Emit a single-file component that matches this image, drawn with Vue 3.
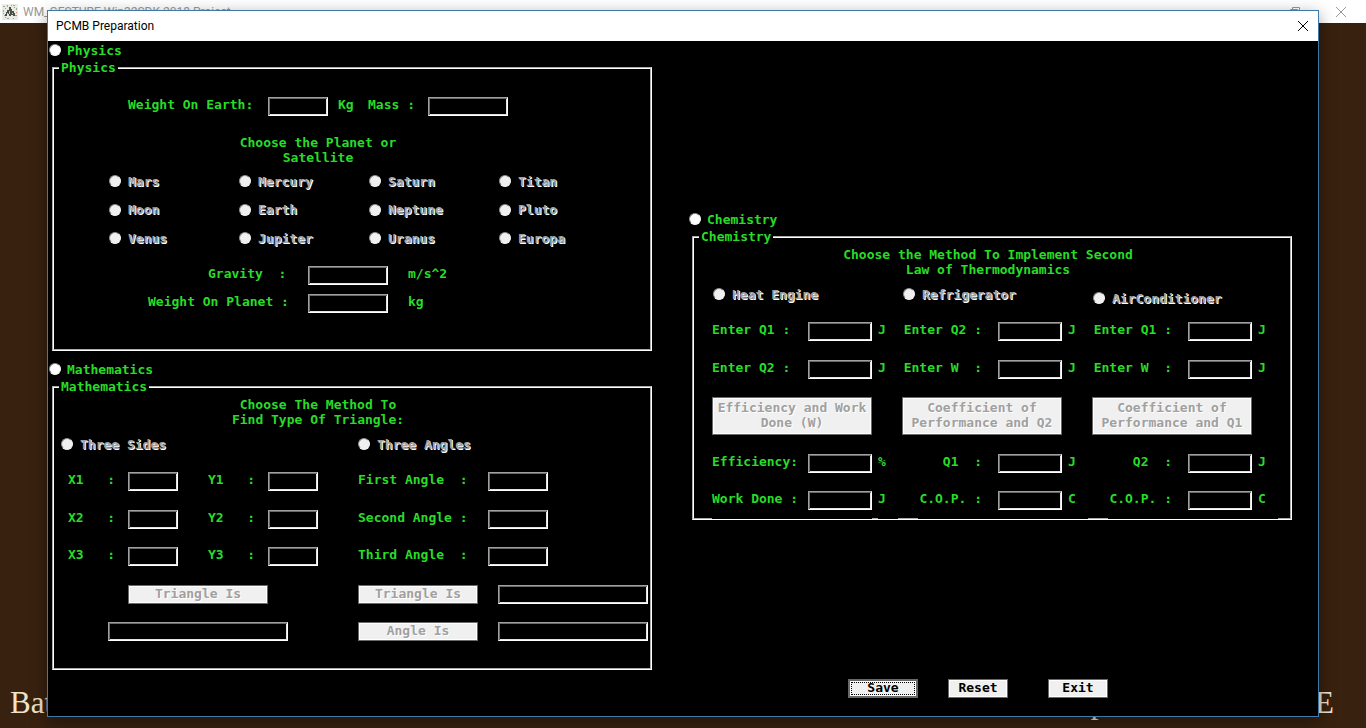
<script setup>
import { ref } from 'vue'

const subject = ref('')
const planet = ref('')
const triangleMethod = ref('')
const process = ref('')

const planets = [
  'Mars', 'Mercury', 'Saturn', 'Titan',
  'Moon', 'Earth', 'Neptune', 'Pluto',
  'Venus', 'Jupiter', 'Uranus', 'Europa',
]

const gravityLabel = 'Gravity  :'
const points = [1, 2, 3]
const coordinate = (axis, n) => `${axis}${n}   :`
const angles = ['First Angle  :', 'Second Angle :', 'Third Angle  :']

const machines = [
  {
    name: 'Heat Engine',
    inputs: [['Enter Q1 :', 'J'], ['Enter Q2 :', 'J']],
    action: ['Efficiency and Work', 'Done (W)'],
    results: [['Efficiency:', '%'], ['Work Done :', 'J']],
  },
  {
    name: 'Refrigerator',
    inputs: [['Enter Q2 :', 'J'], ['Enter W  :', 'J']],
    action: ['Coefficient of', 'Performance and Q2'],
    results: [['Q1  :', 'J'], ['C.O.P. :', 'C']],
  },
  {
    name: 'AirConditioner',
    inputs: [['Enter Q1 :', 'J'], ['Enter W  :', 'J']],
    action: ['Coefficient of', 'Performance and Q1'],
    results: [['Q2  :', 'J'], ['C.O.P. :', 'C']],
  },
]
</script>

<template>
  <div class="desktop">
    <header class="main-bar">
      <svg class="app-icon" viewBox="0 0 16 16" aria-hidden="true">
        <rect width="16" height="16" fill="#e9ebe4" />
        <path d="M1 2h2v1H1zM5 1h1v2H5zM11 1h2v1h-2zM14 4h1v2h-1zM1 6h1v2H1zM2 11h2v1H2zM13 11h2v1h-2zM5 14h2v1H5zM11 14h1v1h-1z" fill="#8fae9c" />
        <path d="M3 4h1v1H3zM12 3h1v1h-1zM1 9h1v1H1zM14 8h1v1h-1zM3 13h1v1H3zM9 1h1v1H9z" fill="#cf8d74" />
        <path d="M7 3h2v2h1v2h2v2h1v3h-2v-1H9v1H7v-2H5v2H3v-2h1V8h1V6h2z" fill="#4a524a" />
        <path d="M7 7h1v3H7zM10 9h1v1h-1zM5 9h1v1H5z" fill="#c9cdc0" />
      </svg>
      <span class="main-title">WM_GESTURE Win32SDK 2018 Project</span>
      <svg class="restore" viewBox="0 0 10 10" aria-hidden="true">
        <path d="M2.5 2.5v-2h7v7h-2M.5 2.5h7v7h-7z" fill="none" stroke="#999" />
      </svg>
      <svg class="cross" viewBox="0 0 10 10" aria-hidden="true">
        <path d="M0 0l10 10M10 0L0 10" fill="none" stroke="#999" />
      </svg>
    </header>
    <footer class="credits">
      <span>Bat</span>
      <span>p: WM_GESTURE</span>
    </footer>

    <section class="dialog" role="dialog" aria-labelledby="dialog-title">
      <header class="dialog-bar">
        <h1 id="dialog-title">PCMB Preparation</h1>
        <button type="button" class="close" aria-label="Close">
          <svg viewBox="0 0 10 10" aria-hidden="true">
            <path d="M0 0l10 10M10 0L0 10" fill="none" stroke="#000" />
          </svg>
        </button>
      </header>

      <form class="body" @submit.prevent>
        <div class="column">
          <label class="radio subject"><input v-model="subject" type="radio" name="subject" value="physics" />Physics</label>
          <fieldset>
            <legend>Physics</legend>
            <div class="row weight">
              <label class="w140" for="weight-earth">Weight On Earth:</label>
              <input id="weight-earth" class="w60" type="text" />
              <span class="kg">Kg</span>
              <label class="w60" for="mass">Mass :</label>
              <input id="mass" class="w80" type="text" />
            </div>
            <p class="heading planet-heading">Choose the Planet or<br />Satellite</p>
            <div class="planets">
              <label v-for="p in planets" :key="p" class="radio off">
                <input v-model="planet" type="radio" name="planet" :value="p" disabled />{{ p }}
              </label>
            </div>
            <div class="planet-results">
              <div class="row">
                <label class="w160 gravity" for="gravity">{{ gravityLabel }}</label>
                <input id="gravity" class="w80" type="text" />
                <span class="unit-wide">m/s^2</span>
              </div>
              <div class="row">
                <label class="w160" for="weight-planet">Weight On Planet :</label>
                <input id="weight-planet" class="w80" type="text" />
                <span class="unit-wide">kg</span>
              </div>
            </div>
          </fieldset>

          <label class="radio subject maths"><input v-model="subject" type="radio" name="subject" value="mathematics" />Mathematics</label>
          <fieldset>
            <legend>Mathematics</legend>
            <p class="heading triangle-heading">Choose The Method To<br />Find Type Of Triangle:</p>
            <div class="methods">
              <div class="sides">
                <label class="radio off"><input v-model="triangleMethod" type="radio" name="triangle" value="sides" disabled />Three Sides</label>
                <div class="lines">
                  <div v-for="n in points" :key="n" class="row">
                    <label class="w60" :for="'x' + n">{{ coordinate('X', n) }}</label>
                    <input :id="'x' + n" class="w50" type="text" />
                    <label class="w60 second" :for="'y' + n">{{ coordinate('Y', n) }}</label>
                    <input :id="'y' + n" class="w50" type="text" />
                  </div>
                  <div class="row inset-button"><button type="button" class="w140" disabled>Triangle Is</button></div>
                  <div class="row inset-result"><input class="w180" type="text" aria-label="Triangle by sides" /></div>
                </div>
              </div>
              <div class="angles">
                <label class="radio off"><input v-model="triangleMethod" type="radio" name="triangle" value="angles" disabled />Three Angles</label>
                <div class="lines">
                  <div v-for="(a, i) in angles" :key="a" class="row">
                    <label class="w130" :for="'angle' + i">{{ a }}</label>
                    <input :id="'angle' + i" class="w60" type="text" />
                  </div>
                  <div class="row spaced">
                    <button type="button" class="w120" disabled>Triangle Is</button>
                    <input class="w150" type="text" aria-label="Triangle by angles" />
                  </div>
                  <div class="row spaced">
                    <button type="button" class="w120" disabled>Angle Is</button>
                    <input class="w150" type="text" aria-label="Angle" />
                  </div>
                </div>
              </div>
            </div>
          </fieldset>
        </div>

        <div class="column right">
          <label class="radio subject"><input v-model="subject" type="radio" name="subject" value="chemistry" />Chemistry</label>
          <fieldset>
            <legend>Chemistry</legend>
            <p class="heading law-heading">Choose the Method To Implement Second<br />Law of Thermodynamics</p>
            <div class="machines">
              <div v-for="(m, c) in machines" :key="m.name" class="machine">
                <label class="radio off"><input v-model="process" type="radio" name="process" :value="m.name" disabled />{{ m.name }}</label>
                <div class="pair given">
                  <div v-for="(f, i) in m.inputs" :key="i" class="row">
                    <label class="quantity" :for="`in-${c}-${i}`">{{ f[0] }}</label>
                    <input :id="`in-${c}-${i}`" class="w64" type="text" />
                    <span class="unit">{{ f[1] }}</span>
                  </div>
                </div>
                <button type="button" class="tall" disabled>{{ m.action[0] }}<br />{{ m.action[1] }}</button>
                <div class="pair found">
                  <div v-for="(f, i) in m.results" :key="i" class="row">
                    <label class="quantity" :for="`out-${c}-${i}`">{{ f[0] }}</label>
                    <input :id="`out-${c}-${i}`" class="w64" type="text" />
                    <span class="unit">{{ f[1] }}</span>
                  </div>
                </div>
              </div>
            </div>
            <div class="edge"><i></i><i></i><i></i><i></i></div>
          </fieldset>
          <div class="actions">
            <button type="submit" class="save">Save</button>
            <button type="reset" class="w60">Reset</button>
            <button type="button" class="w60 exit">Exit</button>
          </div>
        </div>
      </form>
    </section>
  </div>
</template>

<style>
body {
  margin: 0;
  background: #38210f;
}
</style>

<style scoped>
* {
  box-sizing: border-box;
}

.desktop {
  position: relative;
  display: flex;
  flex-direction: column;
  justify-content: space-between;
  min-height: 100vh;
  overflow: hidden;
  background: #38210f;
}

.main-bar {
  display: flex;
  align-items: center;
  height: 23px;
  padding: 0 20px 0 2px;
  background: #fff;
  color: #999;
  font: 12px/16px Roboto, "Noto Sans", sans-serif;
}

.app-icon {
  width: 16px;
  height: 16px;
  margin-right: 5px;
}

.main-title {
  flex: 1;
}

.restore,
.cross {
  width: 10px;
  height: 10px;
}

.restore {
  margin-right: 36px;
}

.cross {
  overflow: visible;
}

.credits {
  display: flex;
  justify-content: space-between;
  padding: 0 32px 8px 10px;
  color: #efe3cd;
  font: 31px/34px "Liberation Serif", serif;
}

.dialog {
  position: absolute;
  inset: 10px 47px 11px;
  display: flex;
  flex-direction: column;
  border: 1px solid #3f79a8;
  background: #000;
  box-shadow: 0 5px 16px rgba(0, 0, 0, 0.4);
}

.dialog-bar {
  display: flex;
  align-items: center;
  justify-content: space-between;
  height: 30px;
  padding: 0 10px 0 8px;
  background: #fff;
  color: #000;
}

h1 {
  margin: 0;
  font: 12px/16px Roboto, "Noto Sans", sans-serif;
}

.close {
  display: flex;
  width: 10px;
  height: 10px;
  padding: 0;
  border: 0;
  background: none;
  box-shadow: none;
}

.close svg {
  width: 10px;
  height: 10px;
  overflow: visible;
}

.body {
  display: grid;
  grid-template-columns: 1fr 1fr;
  gap: 37px;
  padding: 0 26px 0 1px;
  color: #28dc28;
  font: bold 13px/15px "DejaVu Sans Mono", monospace;
}

.column {
  min-width: 0;
}

.right {
  padding-top: 169px;
}

fieldset {
  min-width: 0;
  height: 291px;
  margin: 0 0 0 3px;
  padding: 0;
  border: 2px groove #fff;
}

legend {
  height: 16px;
  margin-left: 5px;
  padding: 0 2px;
}

label,
.row span {
  white-space: pre;
}

.radio {
  display: flex;
  align-items: center;
  gap: 7px;
  height: 18px;
}

.radio.subject {
  gap: 6px;
  margin-bottom: 1px;
}

.radio.maths {
  margin-top: 9px;
}

.off {
  color: #a0a0a0;
  text-shadow: 1px 1px 0 #fff;
}

input[type="radio"] {
  appearance: none;
  flex: none;
  width: 12px;
  height: 12px;
  margin: 0;
  border: 1px solid;
  border-color: #8c8c8c #f4f4f4 #f4f4f4 #8c8c8c;
  border-radius: 50%;
  background: #fff;
}

input[type="radio"]:disabled {
  background: #f0f0f0;
}

input[type="radio"]:checked {
  background: radial-gradient(circle, #000 2px, #fff 3px);
}

input[type="text"] {
  flex: none;
  height: 19px;
  padding: 0 3px;
  border: 1px solid;
  border-color: #a0a0a0 #fff #fff #a0a0a0;
  border-radius: 0;
  outline: 0;
  background: #000;
  box-shadow: inset 1px 1px 0 #696969, inset -1px -1px 0 #e3e3e3;
  color: inherit;
  font: inherit;
}

button {
  flex: none;
  height: 19px;
  padding: 0 0 2px;
  border: 1px solid #696969;
  border-radius: 0;
  background: #f0f0f0;
  box-shadow: inset 0 0 0 1px #fff;
  color: #000;
  font: inherit;
}

button:disabled {
  color: #a0a0a0;
  text-shadow: 1px 1px 0 #fff;
}

.row {
  display: flex;
  align-items: flex-start;
}

.heading {
  margin: 0;
  text-align: center;
}

.w50 { width: 50px; }
.w60 { width: 60px; }
.w64 { width: 64px; }
.w80 { width: 80px; }
.w120 { width: 120px; }
.w130 { width: 130px; }
.w140 { width: 140px; }
.w150 { width: 150px; }
.w160 { width: 160px; }
.w180 { width: 180px; }

.weight {
  padding: 21px 0 0 74px;
}

.kg {
  width: 40px;
  padding-left: 10px;
}

.planet-heading {
  width: 160px;
  margin: 19px 0 0 184px;
}

.planets {
  display: grid;
  grid-template-columns: repeat(4, 130px);
  align-content: space-between;
  height: 75px;
  margin: 7px 0 0 55px;
}

.planet-results {
  display: grid;
  gap: 9px;
  margin: 19px 0 0 94px;
}

.gravity {
  padding-left: 60px;
}

.unit-wide {
  padding-left: 20px;
}

.triangle-heading {
  width: 184px;
  margin: 2px 0 0 172px;
}

.methods {
  display: flex;
  padding: 8px 0 0 7px;
}

.sides {
  width: 297px;
}

.sides .lines {
  margin-left: 7px;
}

.lines {
  display: flex;
  flex-direction: column;
  justify-content: space-between;
  height: 169px;
  margin-top: 19px;
}

.second {
  margin-left: 30px;
}

.inset-button {
  padding-left: 60px;
}

.inset-result {
  padding-left: 40px;
}

.spaced {
  gap: 20px;
}

.law-heading {
  margin: 2px 8px 0 0;
}

.machines {
  display: grid;
  grid-template-columns: repeat(3, 190px);
  margin: 8px 0 0 18px;
}

.machine {
  display: grid;
  grid-template-rows: 22px auto auto auto;
  justify-items: start;
}

.machine > .radio {
  margin-left: 1px;
}

.machine:last-child > .radio {
  align-self: end;
}

.pair {
  display: grid;
}

.given {
  gap: 19px;
  margin-top: 15px;
}

.found {
  gap: 18px;
  margin-top: 19px;
}

.quantity {
  width: 96px;
}

.machine:not(:first-child) .quantity {
  padding-right: 16px;
  text-align: right;
}

.unit {
  padding-left: 6px;
}

.tall {
  width: 160px;
  height: 38px;
  margin-top: 18px;
}

.edge {
  display: flex;
  margin: 8px 0 0 18px;
}

.edge i {
  flex: none;
  width: 170px;
  height: 1px;
  margin-right: 20px;
  background: #000;
}

.edge i:first-child {
  width: 160px;
  margin-right: 6px;
}

.edge i:nth-child(2) {
  width: 20px;
}

.edge i:last-child {
  margin-right: 0;
}

.actions {
  display: flex;
  gap: 30px;
  padding: 159px 0 0 159px;
}

.save {
  width: 70px;
  border-width: 2px;
  outline: 1px dotted #000;
  outline-offset: -4px;
  line-height: 13px;
}

.exit {
  margin-left: 10px;
}
</style>
